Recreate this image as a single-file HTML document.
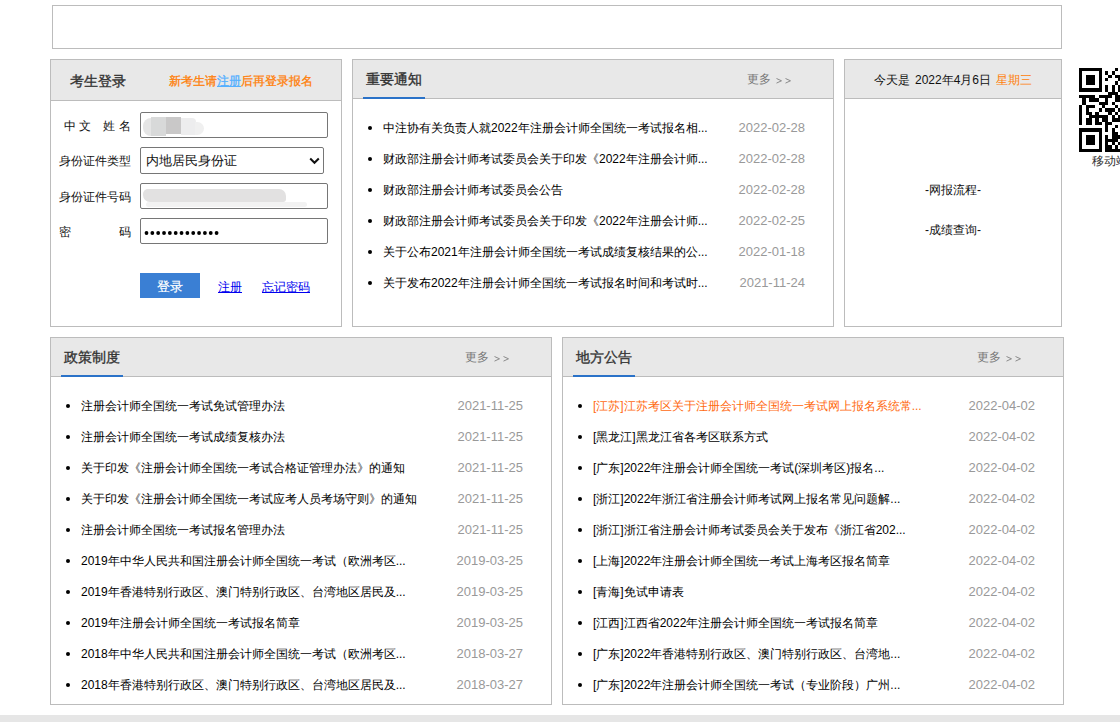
<!DOCTYPE html>
<html><head><meta charset="utf-8">
<style>
*{box-sizing:border-box;margin:0;padding:0}
html,body{width:1120px;height:722px;overflow:hidden;background:#fff}
body{position:relative;font-family:"Liberation Sans",sans-serif;font-size:12px;color:#333}
.box{position:absolute;border:1px solid #bcbcbc;background:#fff}
.hd{position:absolute;left:0;top:0;right:0;background:#e8e8e8;border-bottom:1px solid #bcbcbc}
.ttl{position:absolute;font-size:14px;font-weight:normal;-webkit-text-stroke:0.35px #333;color:#333;line-height:16px;white-space:nowrap}
.bar{position:absolute;height:2px;background:#2a72c8;top:37px;width:62px;left:10px}
.more{position:absolute;color:#777;font-size:12px;line-height:16px;white-space:nowrap;top:11px;width:50px;height:16px}
.more span{font-size:10px;letter-spacing:2px}
ul.lst{position:absolute;list-style:none;left:0;right:0}
ul.lst li{position:absolute;left:0;right:0;height:16px;white-space:nowrap}
ul.lst li i{position:absolute;width:4px;height:4px;border-radius:50%;background:#000;top:6px;left:15px}
ul.lst li .t{position:absolute;left:30px;top:0;line-height:16px;color:#000;font-size:12px}
ul.lst li .d{position:absolute;right:28px;top:0;line-height:16px;color:#999;font-size:13px}
ul.lst li.hl .t{color:#ff6a10}
.lab{position:absolute;left:8px;width:72px;height:16px;line-height:16px;white-space:nowrap;color:#111;font-size:12px}
.lab b{position:absolute;font-weight:normal;top:0}
.inp{position:absolute;left:89px;border:1px solid #767676;border-radius:2px;background:#fff}
</style></head><body>

<div class="box" style="left:52px;top:5px;width:1010px;height:44px"></div>

<!-- login -->
<div class="box" style="left:50px;top:59px;width:292px;height:268px">
  <div class="hd" style="height:41px"></div>
  <div class="ttl" style="left:19px;top:13px">考生登录</div>
  <div style="position:absolute;left:118px;top:13px;line-height:16px;font-size:12px;font-weight:normal;-webkit-text-stroke:0.3px #ff7f0a;color:#ff7f0a;white-space:nowrap">新考生请<span style="color:#55b0ff;-webkit-text-stroke:0.3px #55b0ff;text-decoration:underline">注册</span>后再登录报名</div>

  <div class="lab" style="top:58px"><b style="left:5px">中</b><b style="left:20px">文</b><b style="left:44px">姓</b><b style="left:60px">名</b></div>
  <div class="lab" style="top:93px">身份证件类型</div>
  <div class="lab" style="top:129px">身份证件号码</div>
  <div class="lab" style="top:164px"><b style="left:0">密</b><b style="left:60px">码</b></div>

  <div class="inp" style="top:52px;width:188px;height:26px;overflow:hidden">
    <div style="position:absolute;left:1.5px;top:5px;width:10px;height:17.5px;background:#e5e5e5;border-radius:8px 0 0 8px"></div>
    <div style="position:absolute;left:10px;top:4px;width:15px;height:18.5px;background:#d8d9d9"></div>
    <div style="position:absolute;left:25px;top:3.5px;width:15px;height:17.5px;background:#c9c8c8"></div>
    <div style="position:absolute;left:40px;top:5px;width:15px;height:17px;background:#ededee;border-radius:0 4px 0 0"></div>
    <div style="position:absolute;left:54px;top:9px;width:9px;height:12.5px;background:#f0f0f0;border-radius:0 7px 7px 0"></div>
  </div>
  <div class="inp" style="top:87px;width:184px;height:27px">
    <span style="position:absolute;left:5px;top:4px;line-height:17px;font-size:13px;color:#111">内地居民身份证</span>
    <svg style="position:absolute;left:168px;top:9px" width="11" height="8" viewBox="0 0 11 8"><path d="M1.2 1.5 L5.5 5.8 L9.8 1.5" fill="none" stroke="#111" stroke-width="2"/></svg>
  </div>
  <div class="inp" style="top:123px;width:188px;height:26px;overflow:hidden">
    <div style="position:absolute;left:5px;top:18px;width:161px;height:5px;border-radius:3px;background:#f2f2f2"></div>
    <div style="position:absolute;left:2px;top:5px;width:143px;height:13px;border-radius:5px 7px 3px 7px;background:#e2e1e1"></div>
  </div>
  <div class="inp" style="top:158px;width:188px;height:26px">
    <svg style="position:absolute;left:0;top:0" width="186" height="24"><g fill="#000"><circle cx="5.50" cy="14" r="1.9"/><circle cx="11.34" cy="14" r="1.9"/><circle cx="17.18" cy="14" r="1.9"/><circle cx="23.02" cy="14" r="1.9"/><circle cx="28.86" cy="14" r="1.9"/><circle cx="34.70" cy="14" r="1.9"/><circle cx="40.54" cy="14" r="1.9"/><circle cx="46.38" cy="14" r="1.9"/><circle cx="52.22" cy="14" r="1.9"/><circle cx="58.06" cy="14" r="1.9"/><circle cx="63.90" cy="14" r="1.9"/><circle cx="69.74" cy="14" r="1.9"/><circle cx="75.58" cy="14" r="1.9"/></g></svg>
  </div>

  <div style="position:absolute;left:89px;top:213px;width:60px;height:25px;background:#3a7fd4;color:#fff;font-size:13px;line-height:27px;text-align:center;-webkit-text-stroke:0.2px #fff">登录</div>
  <div style="position:absolute;left:167px;top:219px;line-height:16px;font-size:12px;color:#0000ee;text-decoration:underline">注册</div>
  <div style="position:absolute;left:211px;top:219px;line-height:16px;font-size:12px;color:#0000ee;text-decoration:underline">忘记密码</div>
</div>

<!-- notice -->
<div class="box" style="left:352px;top:59px;width:482px;height:268px">
  <div class="hd" style="height:39px"></div>
  <div class="ttl" style="left:13px;top:11px">重要通知</div>
  <div class="bar"></div>
  <div class="more" style="left:394px">更多<svg style="position:absolute;left:29px;top:7px" width="16" height="6" viewBox="0 0 16 6"><path d="M0.5 0.5 L5.5 2.8 L0.5 5.1 M9.5 0.5 L14.5 2.8 L9.5 5.1" fill="none" stroke="#8a8a8a" stroke-width="1"/></svg></div>
  <ul class="lst" style="top:60px">
<li style="top:0px"><i></i><span class="t">中注协有关负责人就2022年注册会计师全国统一考试报名相...</span><span class="d">2022-02-28</span></li>
<li style="top:31px"><i></i><span class="t">财政部注册会计师考试委员会关于印发《2022年注册会计师...</span><span class="d">2022-02-28</span></li>
<li style="top:62px"><i></i><span class="t">财政部注册会计师考试委员会公告</span><span class="d">2022-02-28</span></li>
<li style="top:93px"><i></i><span class="t">财政部注册会计师考试委员会关于印发《2022年注册会计师...</span><span class="d">2022-02-25</span></li>
<li style="top:124px"><i></i><span class="t">关于公布2021年注册会计师全国统一考试成绩复核结果的公...</span><span class="d">2022-01-18</span></li>
<li style="top:155px"><i></i><span class="t">关于发布2022年注册会计师全国统一考试报名时间和考试时...</span><span class="d">2021-11-24</span></li>
  </ul>
</div>

<!-- date -->
<div class="box" style="left:844px;top:59px;width:218px;height:268px">
  <div class="hd" style="height:39px"></div>
  <div style="position:absolute;left:0;right:0;top:12px;text-align:center;line-height:16px;color:#111;font-size:12px;word-spacing:2px">今天是 2022年4月6日 <span style="color:#ff7f0a">星期三</span></div>
  <div style="position:absolute;left:0;right:0;top:122px;text-align:center;line-height:16px;color:#111">-网报流程-</div>
  <div style="position:absolute;left:0;right:0;top:162px;text-align:center;line-height:16px;color:#111">-成绩查询-</div>
</div>

<!-- QR -->
<svg style="position:absolute;left:1079px;top:68px" width="42.5" height="84" viewBox="0 0 13 25" preserveAspectRatio="none" shape-rendering="crispEdges"><g fill="#000"><rect x="0" y="0" width="7" height="1"/><rect x="11" y="0" width="1" height="1"/><rect x="0" y="1" width="1" height="1"/><rect x="6" y="1" width="1" height="1"/><rect x="8" y="1" width="1" height="1"/><rect x="10" y="1" width="1" height="1"/><rect x="0" y="2" width="1" height="1"/><rect x="2" y="2" width="3" height="1"/><rect x="6" y="2" width="1" height="1"/><rect x="9" y="2" width="1" height="1"/><rect x="11" y="2" width="2" height="1"/><rect x="0" y="3" width="1" height="1"/><rect x="2" y="3" width="3" height="1"/><rect x="6" y="3" width="1" height="1"/><rect x="8" y="3" width="1" height="1"/><rect x="12" y="3" width="1" height="1"/><rect x="0" y="4" width="1" height="1"/><rect x="2" y="4" width="3" height="1"/><rect x="6" y="4" width="1" height="1"/><rect x="11" y="4" width="1" height="1"/><rect x="0" y="5" width="1" height="1"/><rect x="6" y="5" width="1" height="1"/><rect x="8" y="5" width="1" height="1"/><rect x="10" y="5" width="1" height="1"/><rect x="12" y="5" width="1" height="1"/><rect x="0" y="6" width="7" height="1"/><rect x="8" y="6" width="1" height="1"/><rect x="10" y="6" width="1" height="1"/><rect x="12" y="6" width="1" height="1"/><rect x="9" y="7" width="3" height="1"/><rect x="0" y="8" width="5" height="1"/><rect x="6" y="8" width="4" height="1"/><rect x="11" y="8" width="2" height="1"/><rect x="1" y="9" width="1" height="1"/><rect x="3" y="9" width="3" height="1"/><rect x="8" y="9" width="1" height="1"/><rect x="11" y="9" width="2" height="1"/><rect x="1" y="10" width="1" height="1"/><rect x="6" y="10" width="3" height="1"/><rect x="10" y="10" width="1" height="1"/><rect x="0" y="11" width="1" height="1"/><rect x="2" y="11" width="3" height="1"/><rect x="7" y="11" width="1" height="1"/><rect x="11" y="11" width="1" height="1"/><rect x="0" y="12" width="1" height="1"/><rect x="2" y="12" width="1" height="1"/><rect x="6" y="12" width="1" height="1"/><rect x="8" y="12" width="3" height="1"/><rect x="12" y="12" width="1" height="1"/><rect x="0" y="13" width="1" height="1"/><rect x="2" y="13" width="2" height="1"/><rect x="5" y="13" width="1" height="1"/><rect x="9" y="13" width="1" height="1"/><rect x="11" y="13" width="1" height="1"/><rect x="0" y="14" width="1" height="1"/><rect x="3" y="14" width="6" height="1"/><rect x="10" y="14" width="1" height="1"/><rect x="12" y="14" width="1" height="1"/><rect x="0" y="15" width="1" height="1"/><rect x="2" y="15" width="2" height="1"/><rect x="5" y="15" width="1" height="1"/><rect x="7" y="15" width="2" height="1"/><rect x="10" y="15" width="3" height="1"/><rect x="0" y="16" width="1" height="1"/><rect x="2" y="16" width="2" height="1"/><rect x="5" y="16" width="2" height="1"/><rect x="8" y="16" width="2" height="1"/><rect x="8" y="17" width="1" height="1"/><rect x="11" y="17" width="1" height="1"/><rect x="0" y="18" width="7" height="1"/><rect x="8" y="18" width="1" height="1"/><rect x="10" y="18" width="1" height="1"/><rect x="0" y="19" width="1" height="1"/><rect x="6" y="19" width="1" height="1"/><rect x="10" y="19" width="2" height="1"/><rect x="0" y="20" width="1" height="1"/><rect x="2" y="20" width="3" height="1"/><rect x="6" y="20" width="1" height="1"/><rect x="8" y="20" width="1" height="1"/><rect x="10" y="20" width="3" height="1"/><rect x="0" y="21" width="1" height="1"/><rect x="2" y="21" width="3" height="1"/><rect x="6" y="21" width="1" height="1"/><rect x="8" y="21" width="4" height="1"/><rect x="0" y="22" width="1" height="1"/><rect x="2" y="22" width="3" height="1"/><rect x="6" y="22" width="1" height="1"/><rect x="8" y="22" width="1" height="1"/><rect x="10" y="22" width="1" height="1"/><rect x="12" y="22" width="1" height="1"/><rect x="0" y="23" width="1" height="1"/><rect x="6" y="23" width="1" height="1"/><rect x="8" y="23" width="2" height="1"/><rect x="11" y="23" width="1" height="1"/><rect x="0" y="24" width="7" height="1"/><rect x="8" y="24" width="5" height="1"/></g></svg>
<div style="position:absolute;left:1092px;top:153px;line-height:16px;font-size:12px;color:#333;white-space:nowrap">移动端报名</div>

<!-- policy -->
<div class="box" style="left:50px;top:337px;width:502px;height:368px">
  <div class="hd" style="height:39px"></div>
  <div class="ttl" style="left:13px;top:11px">政策制度</div>
  <div class="bar"></div>
  <div class="more" style="left:414px">更多<svg style="position:absolute;left:29px;top:7px" width="16" height="6" viewBox="0 0 16 6"><path d="M0.5 0.5 L5.5 2.8 L0.5 5.1 M9.5 0.5 L14.5 2.8 L9.5 5.1" fill="none" stroke="#8a8a8a" stroke-width="1"/></svg></div>
  <ul class="lst" style="top:60px">
<li style="top:0px"><i></i><span class="t">注册会计师全国统一考试免试管理办法</span><span class="d">2021-11-25</span></li>
<li style="top:31px"><i></i><span class="t">注册会计师全国统一考试成绩复核办法</span><span class="d">2021-11-25</span></li>
<li style="top:62px"><i></i><span class="t">关于印发《注册会计师全国统一考试合格证管理办法》的通知</span><span class="d">2021-11-25</span></li>
<li style="top:93px"><i></i><span class="t">关于印发《注册会计师全国统一考试应考人员考场守则》的通知</span><span class="d">2021-11-25</span></li>
<li style="top:124px"><i></i><span class="t">注册会计师全国统一考试报名管理办法</span><span class="d">2021-11-25</span></li>
<li style="top:155px"><i></i><span class="t">2019年中华人民共和国注册会计师全国统一考试（欧洲考区...</span><span class="d">2019-03-25</span></li>
<li style="top:186px"><i></i><span class="t">2019年香港特别行政区、澳门特别行政区、台湾地区居民及...</span><span class="d">2019-03-25</span></li>
<li style="top:217px"><i></i><span class="t">2019年注册会计师全国统一考试报名简章</span><span class="d">2019-03-25</span></li>
<li style="top:248px"><i></i><span class="t">2018年中华人民共和国注册会计师全国统一考试（欧洲考区...</span><span class="d">2018-03-27</span></li>
<li style="top:279px"><i></i><span class="t">2018年香港特别行政区、澳门特别行政区、台湾地区居民及...</span><span class="d">2018-03-27</span></li>
  </ul>
</div>

<!-- local -->
<div class="box" style="left:562px;top:337px;width:502px;height:368px">
  <div class="hd" style="height:39px"></div>
  <div class="ttl" style="left:13px;top:11px">地方公告</div>
  <div class="bar"></div>
  <div class="more" style="left:414px">更多<svg style="position:absolute;left:29px;top:7px" width="16" height="6" viewBox="0 0 16 6"><path d="M0.5 0.5 L5.5 2.8 L0.5 5.1 M9.5 0.5 L14.5 2.8 L9.5 5.1" fill="none" stroke="#8a8a8a" stroke-width="1"/></svg></div>
  <ul class="lst" style="top:60px">
<li style="top:0px" class="hl"><i></i><span class="t">[江苏]江苏考区关于注册会计师全国统一考试网上报名系统常...</span><span class="d">2022-04-02</span></li>
<li style="top:31px"><i></i><span class="t">[黑龙江]黑龙江省各考区联系方式</span><span class="d">2022-04-02</span></li>
<li style="top:62px"><i></i><span class="t">[广东]2022年注册会计师全国统一考试(深圳考区)报名...</span><span class="d">2022-04-02</span></li>
<li style="top:93px"><i></i><span class="t">[浙江]2022年浙江省注册会计师考试网上报名常见问题解...</span><span class="d">2022-04-02</span></li>
<li style="top:124px"><i></i><span class="t">[浙江]浙江省注册会计师考试委员会关于发布《浙江省202...</span><span class="d">2022-04-02</span></li>
<li style="top:155px"><i></i><span class="t">[上海]2022年注册会计师全国统一考试上海考区报名简章</span><span class="d">2022-04-02</span></li>
<li style="top:186px"><i></i><span class="t">[青海]免试申请表</span><span class="d">2022-04-02</span></li>
<li style="top:217px"><i></i><span class="t">[江西]江西省2022年注册会计师全国统一考试报名简章</span><span class="d">2022-04-02</span></li>
<li style="top:248px"><i></i><span class="t">[广东]2022年香港特别行政区、澳门特别行政区、台湾地...</span><span class="d">2022-04-02</span></li>
<li style="top:279px"><i></i><span class="t">[广东]2022年注册会计师全国统一考试（专业阶段）广州...</span><span class="d">2022-04-02</span></li>
  </ul>
</div>

<div style="position:absolute;left:0;top:715px;width:1120px;height:7px;background:#e6e6e6"></div>
</body></html>
